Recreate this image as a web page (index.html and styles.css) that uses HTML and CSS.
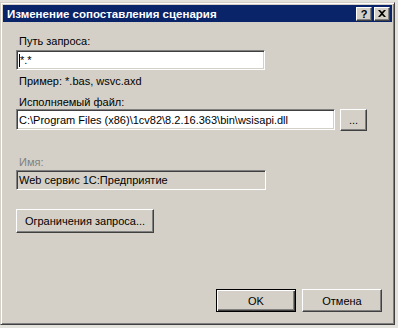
FILE: index.html
```html
<!DOCTYPE html>
<html lang="ru">
<head>
  <meta charset="UTF-8">
  <title>Изменение сопоставления сценария</title>
  <link rel="stylesheet" href="styles.css">
</head>
<body>
  <div class="dialog">
    <div class="titlebar">
      <span class="title">Изменение сопоставления сценария</span>
      <div class="title-btns">
        <span class="tbtn">?</span>
        <span class="tbtn close">
          <svg width="8" height="7" viewBox="0 0 8 7"><path d="M0 0h2l2 2 2-2h2L5 3.5 8 7H6L4 5 2 7H0l3-3.5z" fill="#000"/></svg>
        </span>
      </div>
    </div>
    <div class="body">
      <label class="lbl l-path">Путь запроса:</label>
      <div class="field f-path"><span class="caret"></span>*.*</div>
      <div class="hint">Пример: *.bas, wsvc.axd</div>
      <label class="lbl l-exe">Исполняемый файл:</label>
      <div class="row">
        <div class="field f-exe">C:\Program Files (x86)\1cv82\8.2.16.363\bin\wsisapi.dll</div>
        <button class="btn browse">...</button>
      </div>
      <label class="lbl l-name disabled">Имя:</label>
      <div class="field f-name readonly">Web сервис 1С:Предприятие</div>
      <button class="btn limits">Ограничения запроса...</button>
      <div class="footer">
        <button class="btn default">OK</button>
        <button class="btn">Отмена</button>
      </div>
    </div>
  </div>
</body>
</html>
```

FILE: styles.css
```css
* {
  margin: 0;
  padding: 0;
  box-sizing: border-box;
}

body {
  width: 398px;
  height: 328px;
  overflow: hidden;
  background: #e4e2dc;
  font-family: "Liberation Sans", Arial, sans-serif;
  font-size: 11px;
  color: #000;
}

.dialog {
  display: flex;
  flex-direction: column;
  margin-top: 2px;
  width: 395px;
  height: 323px;
  padding: 2px;
  background: #d4d0c8;
  border: 1px solid;
  border-color: #d4d0c8 #404040 #404040 #d4d0c8;
  box-shadow: inset 1px 1px #fff, inset -1px -1px #808080;
}

.titlebar {
  display: flex;
  align-items: center;
  justify-content: space-between;
  height: 17px;
  padding: 0 2px 0 4px;
  background: #0a246a;
}

.title {
  color: #fff;
  font-weight: bold;
  font-size: 11.5px;
}

.title-btns {
  display: flex;
  gap: 2px;
}

.tbtn {
  display: flex;
  align-items: center;
  justify-content: center;
  width: 16px;
  height: 14px;
  background: #d4d0c8;
  border: 1px solid;
  border-color: #fff #404040 #404040 #fff;
  box-shadow: inset -1px -1px #808080;
  font-weight: bold;
  font-size: 11px;
  line-height: 12px;
}

.body {
  flex: 1;
  display: flex;
  flex-direction: column;
  align-items: flex-start;
  padding: 13px 0 0 13px;
}

.lbl, .hint {
  display: block;
  line-height: 13px;
  padding-left: 3px;
}

.disabled {
  color: #808080;
}

.field {
  display: flex;
  align-items: center;
  height: 20px;
  padding-left: 2px;
  background: #fff;
  border: 1px solid;
  border-color: #808080 #fff #fff #808080;
  box-shadow: inset 1px 1px #404040, inset -1px -1px #d4d0c8;
  white-space: nowrap;
  overflow: hidden;
}

.caret {
  display: inline-block;
  width: 1px;
  height: 13px;
  background: #000;
}

.f-path {
  margin-top: 2px;
  width: 249px;
}

.hint {
  margin-top: 5px;
}

.l-exe {
  margin-top: 8px;
}

.row {
  display: flex;
  gap: 5px;
  margin-top: 0;
}

.f-exe {
  width: 319px;
  height: 21px;
}

.l-name {
  margin-top: 25px;
}

.f-name {
  margin-top: 1px;
  width: 250px;
}

.readonly {
  background: #d4d0c8;
}

.btn {
  height: 23px;
  padding: 0 6px;
  background: #d4d0c8;
  font-family: inherit;
  font-size: 11px;
  color: #000;
  border: 1px solid;
  border-color: #fff #404040 #404040 #fff;
  box-shadow: inset -1px -1px #808080;
}

.browse {
  width: 27px;
  height: 22px;
}

.limits {
  margin-top: 19px;
  width: 138px;
  height: 24px;
}

.footer {
  display: flex;
  gap: 6px;
  align-self: flex-end;
  margin: auto 10px 10px 0;
}

.footer .btn {
  width: 80px;
}

.default {
  border: 1px solid #000;
  box-shadow: inset 1px 1px #fff, inset -1px -1px #404040, inset -2px -2px #808080;
}
```
